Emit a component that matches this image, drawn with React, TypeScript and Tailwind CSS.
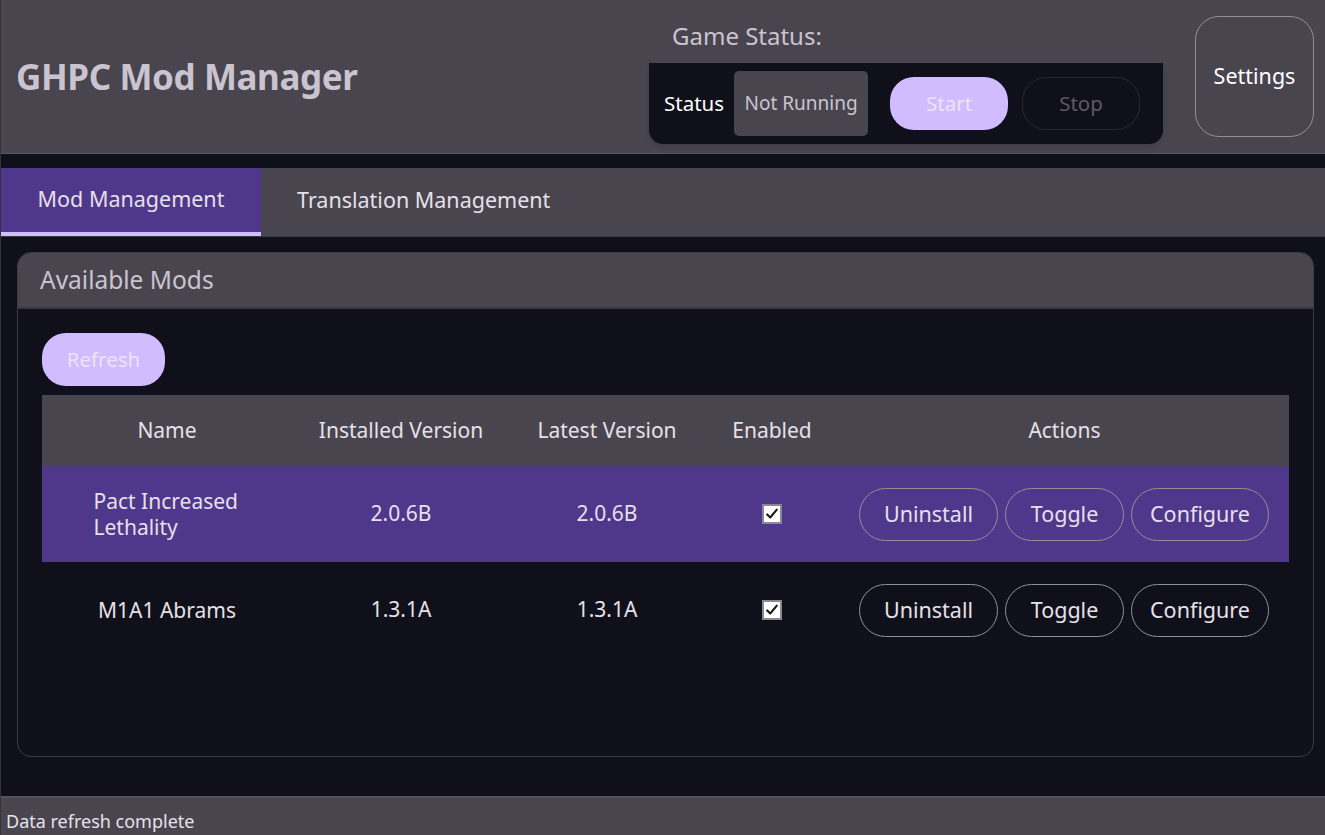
import { useState } from 'react'

const mods = [
  { id: 1, name: 'Pact Increased Lethality', installed: '2.0.6B', latest: '2.0.6B', enabled: true },
  { id: 2, name: 'M1A1 Abrams', installed: '1.3.1A', latest: '1.3.1A', enabled: true },
]

function ActionButton({ label, width }: { label: string; width: string }) {
  return (
    <button
      className={`${width} h-[53px] rounded-full border border-[#938f99] text-[21.5px] text-[#e6e0e9]`}
    >
      {label}
    </button>
  )
}

export default function App() {
  const [tab, setTab] = useState('mods')
  const [selected, setSelected] = useState(1)

  return (
    <div
      className="h-[835px] w-[1325px] flex flex-col bg-[#10101a] border-l border-[#33313a] overflow-hidden"
      style={{ fontFamily: '"Noto Sans", "Open Sans", sans-serif' }}
    >
      {/* Header */}
      <div className="h-[154px] shrink-0 bg-[#49454f] border-b border-[#5a5660] flex items-stretch">
        <div className="flex-1 flex items-center pl-[15px] pt-[2px]">
          <h1 className="text-[35px] font-bold text-[#cac4d0] tracking-[-0.4px]">GHPC Mod Manager</h1>
        </div>
        <div className="w-[514px] flex flex-col mr-[32px]">
          <div className="h-[63px] flex items-center pl-[23px] pt-[8px] text-[24px] text-[#cac4d0]">
            Game Status:
          </div>
          <div className="h-[81px] bg-[#10101a] rounded-b-[14px] flex items-center pl-[15px] pr-[22px] shadow-md">
            <span className="text-[20.5px] text-white">Status</span>
            <div className="ml-[10px] w-[134px] h-[65px] rounded-[5px] bg-[#49454f] flex items-center justify-center text-[19px] text-[#cac4d0]">
              Not Running
            </div>
            <button className="ml-[22px] w-[118px] h-[53px] rounded-[24px] bg-[#d0bcff] text-[20.5px] text-[#ece4f6]">
              Start
            </button>
            <button className="ml-[14px] w-[118px] h-[53px] rounded-[24px] border border-[#2a2932] text-[20.5px] text-[#5d5a64]">
              Stop
            </button>
          </div>
        </div>
        <div className="flex items-start pt-[16px] pr-[11px]">
          <button className="w-[119px] h-[121px] rounded-[24px] border border-[#938f99] text-[21.5px] text-white">
            Settings
          </button>
        </div>
      </div>

      <div className="h-[14px] shrink-0" />

      {/* Tabs */}
      <div className="h-[69px] shrink-0 bg-[#49454f] border-b border-[#3a3841] flex">
        <button
          onClick={() => setTab('mods')}
          className={`w-[260px] h-full flex items-center justify-center pb-[2px] text-[21.5px] text-[#e6e0e9] border-b-[4px] ${
            tab === 'mods' ? 'bg-[#4f378b] border-[#d0bcff]' : 'border-transparent'
          }`}
        >
          Mod Management
        </button>
        <button
          onClick={() => setTab('translations')}
          className={`px-[36px] h-full flex items-center justify-center text-[21.5px] text-[#e6e0e9] border-b-[4px] ${
            tab === 'translations' ? 'bg-[#4f378b] border-[#d0bcff]' : 'border-transparent'
          }`}
        >
          Translation Management
        </button>
      </div>

      {/* Main */}
      <div className="flex-1 pt-[15px] pr-[11px] pl-[16px] pb-[39px] flex">
        <div className="flex-1 rounded-[14px] border border-[#3e3b45] flex flex-col overflow-hidden">
          <div className="h-[56px] shrink-0 bg-[#49454f] border-b-2 border-[#3a3841] flex items-center pl-[22px] text-[24.5px] text-[#cac4d0]">
            Available Mods
          </div>
          <div className="flex-1 px-[24px] pt-[24px]">
            <button className="w-[123px] h-[53px] rounded-[24px] bg-[#d0bcff] text-[20.5px] text-[#ece4f6]">
              Refresh
            </button>

            <div className="mt-[9px]">
              <div className="h-[71px] bg-[#49454f] grid grid-cols-[250px_218px_194px_136px_1fr] items-center text-center text-[21px] text-[#e6e0e9]">
                <div>Name</div>
                <div>Installed Version</div>
                <div>Latest Version</div>
                <div>Enabled</div>
                <div>Actions</div>
              </div>
              {mods.map((mod) => (
                <div
                  key={mod.id}
                  onClick={() => setSelected(mod.id)}
                  className={`h-[96px] grid grid-cols-[250px_218px_194px_136px_1fr] items-center text-center text-[21px] text-[#e6e0e9] ${
                    selected === mod.id ? 'bg-[#4f378b]' : ''
                  }`}
                >
                  <div className="flex justify-center">
                    <span className="max-w-[147px] text-left leading-[26px]">{mod.name}</span>
                  </div>
                  <div>{mod.installed}</div>
                  <div>{mod.latest}</div>
                  <div className="flex justify-center">
                    <span className="w-[20px] h-[20px] bg-white border-2 border-[#8a8890] flex items-center justify-center">
                      <svg viewBox="0 0 16 16" className="w-[14px] h-[14px]">
                        <path d="M2.5 8.5 L6 12 L13.5 3" fill="none" stroke="#1a1a1a" strokeWidth="2.4" strokeLinecap="round" strokeLinejoin="round" />
                      </svg>
                    </span>
                  </div>
                  <div className="flex justify-end gap-[7px] pr-[20px]">
                    <ActionButton label="Uninstall" width="w-[139px]" />
                    <ActionButton label="Toggle" width="w-[119px]" />
                    <ActionButton label="Configure" width="w-[138px]" />
                  </div>
                </div>
              ))}
            </div>
          </div>
        </div>
      </div>

      {/* Status bar */}
      <div className="h-[39px] shrink-0 bg-[#49454f] border-t-2 border-[#55515c] flex items-end pb-0 pl-[5px] text-[18px] text-[#e6e0e9]">
        Data refresh complete
      </div>
    </div>
  )
}
